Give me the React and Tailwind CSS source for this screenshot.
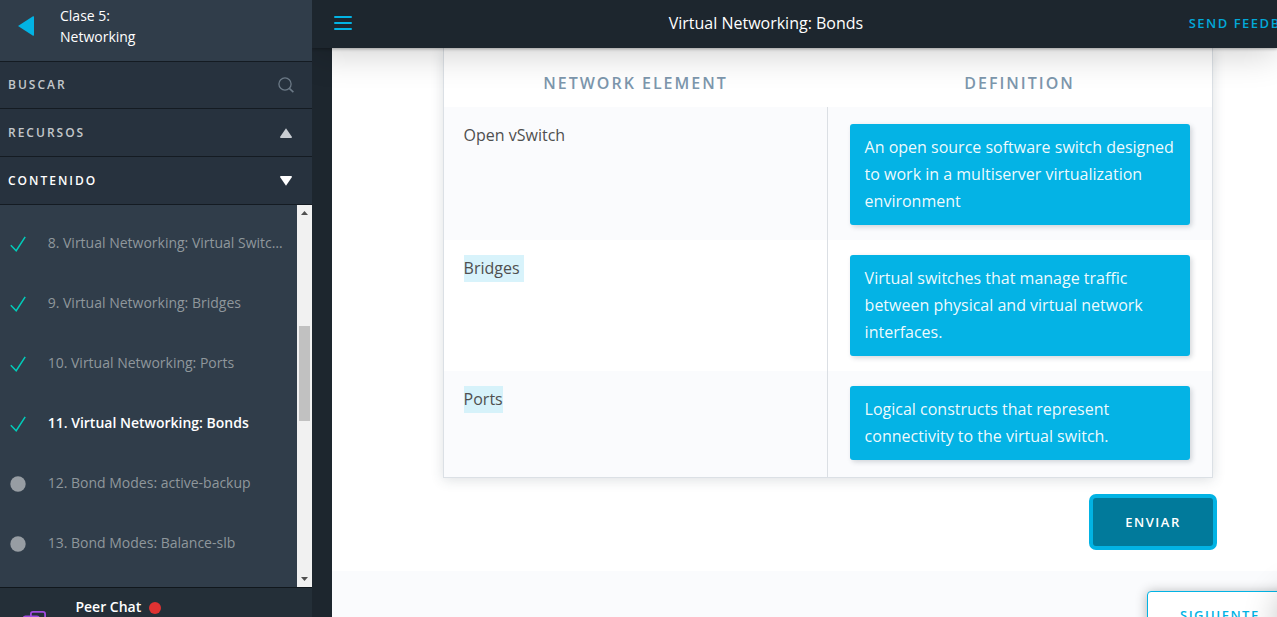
import React from "react";

const lessons = [
  { title: "8. Virtual Networking: Virtual Switches", done: true },
  { title: "9. Virtual Networking: Bridges", done: true },
  { title: "10. Virtual Networking: Ports", done: true },
  { title: "11. Virtual Networking: Bonds", done: true, active: true },
  { title: "12. Bond Modes: active-backup" },
  { title: "13. Bond Modes: Balance-slb" },
];

const rows = [
  {
    term: "Open vSwitch",
    text: "An open source software switch designed to work in a multiserver virtualization environment",
    cell: "h-[133px] pt-[17px]",
    label: "pt-[15px]",
    bg: "bg-[#fafbfd]",
  },
  {
    term: "Bridges ",
    text: "Virtual switches that manage traffic between physical and virtual network interfaces.",
    cell: "h-[131px] pt-[15px]",
    label: "pt-[15px]",
    mark: "bg-[#d8f3fb]",
    bg: "bg-white",
  },
  {
    term: "Ports",
    text: "Logical constructs that represent connectivity to the virtual switch.",
    cell: "h-[106px] pt-[15px]",
    label: "pt-[15px]",
    mark: "bg-[#d6f2fa]",
    bg: "bg-[#fafbfd]",
  },
];

function Lesson({ title, done, active }) {
  return (
    <li className="flex h-[60px] items-center">
      <svg className="mt-0.5 ml-[10px] h-4 w-4 shrink-0" viewBox="0 0 16 16" fill="none">
        {done ? (
          <path d="M0.8 9.3 L6.2 14.7 L15.2 0.8" stroke="#02ccba" strokeWidth="1.5" />
        ) : (
          <circle cx="8" cy="8" r="7.7" fill="#979da3" />
        )}
      </svg>
      <span
        className={
          active
            ? "ml-[21.7px] w-[236px] truncate font-semibold text-white"
            : "ml-[21.7px] w-[236px] truncate text-[#8f979c]"
        }
      >
        {title}
      </span>
    </li>
  );
}

function Sidebar() {
  return (
    <aside className="flex h-full w-[312px] shrink-0 flex-col bg-[#303d4a]">
      <header className="flex h-[62px] shrink-0 border-b border-[#141b22]">
        <svg className="mt-4 ml-[18px] h-5 w-4 shrink-0" viewBox="0 0 16 20">
          <path d="M0 10 L15 0.3 Q16 0 16 1 V19 Q16 20 15 19.7 Z" fill="#02b3e4" />
        </svg>
        <div className="ml-[26px] pt-[5px] text-sm leading-[21px] text-white">
          Clase 5:
          <br />
          Networking
        </div>
      </header>
      <div className="flex h-[47px] shrink-0 items-center justify-between border-b border-[#141b22] bg-[#27323e] pr-[18px] pl-2">
        <span className="text-xs font-semibold tracking-[2px] text-[#c3c7cb]">BUSCAR</span>
        <svg className="h-4 w-4" viewBox="0 0 16 16" fill="none" stroke="#6b7986" strokeWidth="1.3">
          <circle cx="7" cy="7" r="6.1" />
          <path d="M11.3 11.3 L15.4 15.2" strokeWidth="1.6" />
        </svg>
      </div>
      <div className="flex h-12 shrink-0 items-center justify-between border-b border-[#141b22] bg-[#27323e] pr-5 pl-2">
        <span className="text-xs font-semibold tracking-[2px] text-[#c3c7cb]">RECURSOS</span>
        <svg className="h-[10px] w-3" viewBox="0 0 12 10">
          <path d="M6 0.2 L12 9 Q12 10 11 10 H1 Q0 10 0 9 Z" fill="#c9cdd2" />
        </svg>
      </div>
      <div className="flex h-12 shrink-0 items-center justify-between border-b border-[#141b22] bg-[#27323e] pr-5 pl-2">
        <span className="text-xs font-semibold tracking-[2px] text-white">CONTENIDO</span>
        <svg className="h-[10px] w-3" viewBox="0 0 12 10">
          <path d="M6 9.8 L12 1 Q12 0 11 0 H1 Q0 0 0 1 Z" fill="#fff" />
        </svg>
      </div>
      <div className="flex h-[382px] shrink-0">
        <ul className="w-[297px] overflow-hidden pt-2 text-sm">
          {lessons.map((l) => (
            <Lesson key={l.title} {...l} />
          ))}
        </ul>
        <div className="flex w-[15px] flex-col items-center bg-[#f1f1f1]">
          <svg className="mt-[6px] h-1 w-[7px]" viewBox="0 0 7 4">
            <path d="M3.5 0 L7 4 H0 Z" fill="#505050" />
          </svg>
          <div className="mt-[111px] h-[95px] w-[11px] bg-[#c1c1c1]" />
          <svg className="mt-auto mb-[6px] h-1 w-[7px]" viewBox="0 0 7 4">
            <path d="M3.5 4 L7 0 H0 Z" fill="#505050" />
          </svg>
        </div>
      </div>
      <footer className="flex h-[60px] shrink-0 border-t border-[#10171c] bg-[#242f38]">
        <svg className="mt-[23px] ml-[22px] h-5 w-6 shrink-0" viewBox="0 0 24 20" fill="none" stroke="#a04be0" strokeWidth="1.8">
          <path d="M8.9 6 V3 Q8.9 0.9 11 0.9 H21 Q23.1 0.9 23.1 3 V12 H18" />
          <path d="M1.5 17 V7.5 Q1.5 5.3 3.5 5.3 H15 Q17 5.3 17 7.5 V17 Z" />
        </svg>
        <div className="ml-[29.4px] flex h-5 items-center pt-[18px] text-sm font-semibold text-white">
          Peer Chat
          <span className="mt-0.5 ml-2 h-3 w-3 rounded-full bg-[#df3232]" />
        </div>
      </footer>
    </aside>
  );
}

function TopBar() {
  return (
    <header className="relative z-10 flex h-12 shrink-0 bg-[#1d262e] shadow-[0_1px_3px_rgba(0,0,0,0.3),0_5px_36px_rgba(0,0,0,0.2)]">
      <div className="mt-4 ml-[22px] flex h-[14px] w-[18px] shrink-0 flex-col justify-between">
        <span className="h-0.5 rounded-full bg-[#02b3e4]" />
        <span className="h-0.5 rounded-full bg-[#02b3e4]" />
        <span className="h-0.5 rounded-full bg-[#02b3e4]" />
      </div>
      <h1 className="ml-[316.7px] w-[520px] shrink-0 pt-[11px] text-base leading-6 whitespace-nowrap text-white">
        Virtual Networking: Bonds
      </h1>
      <a className="shrink-0 pt-[14px] text-[13px] leading-[18px] font-semibold tracking-[1.5px] whitespace-nowrap text-[#02a8d8]">
        SEND FEEDBACK
      </a>
    </header>
  );
}

function MatchTable() {
  return (
    <section className="ml-[111px] h-[430px] w-[770px] border-x border-b border-[#dbe0e5] bg-white text-base leading-[27px] text-[#4f4f4f] shadow-[0_2px_12px_rgba(46,61,73,0.16)]">
      <div className="flex h-[59px] pt-[22px] text-center font-semibold tracking-[2px] text-[#7d97ad]">
        <div className="w-[384px] pr-px">NETWORK ELEMENT</div>
        <div className="w-[384px] pr-px">DEFINITION</div>
      </div>
      {rows.map((r) => (
        <div key={r.term} className={`flex ${r.bg}`}>
          <div className={`w-[384px] shrink-0 border-r border-[#dbdfe4] pl-[19.6px] ${r.label}`}>
            <span className={`inline-block whitespace-pre ${r.mark || ""}`}>{r.term}</span>
          </div>
          <div className={`w-[384px] px-[22px] ${r.cell}`}>
            <p className="rounded-[3px] bg-[#04b3e5] px-[14.6px] py-[10px] text-white/95 shadow-[2px_2px_5px_rgba(46,61,73,0.2)]">
              {r.text}
            </p>
          </div>
        </div>
      ))}
    </section>
  );
}

export default function App() {
  return (
    <div className="relative flex h-[617px] w-full overflow-hidden bg-[#1d262e] font-['Open_Sans',sans-serif]">
      <Sidebar />
      <div className="flex min-w-0 flex-1 flex-col overflow-hidden">
        <TopBar />
        <main className="ml-5 flex-1 overflow-hidden bg-white">
          <div className="h-[523px]">
            <MatchTable />
            <button className="mt-4 ml-[757px] flex h-14 w-32 items-center justify-center rounded-[7px] border-4 border-[#02b3e4] bg-[#017a9b] text-[13px] leading-[18px] font-semibold tracking-[1.5px] text-white">
              ENVIAR
            </button>
          </div>
          <div className="h-20 bg-[#fafbfd] pt-5">
            <button className="ml-[815px] h-12 w-[200px] rounded-[4px] border border-[#02b3e4] bg-white pl-8 text-left text-[13px] leading-[18px] font-semibold tracking-[1.5px] text-[#02b3e4] shadow-[0_1px_12px_rgba(0,0,0,0.3)]">
              SIGUIENTE
            </button>
          </div>
        </main>
      </div>
      {/* Floating help launcher, parked past the right edge */}
      <div className="absolute top-[590px] -right-[66px] h-16 w-16 rounded-full shadow-[0_0_36px_rgba(0,0,0,0.3)]" />
    </div>
  );
}
